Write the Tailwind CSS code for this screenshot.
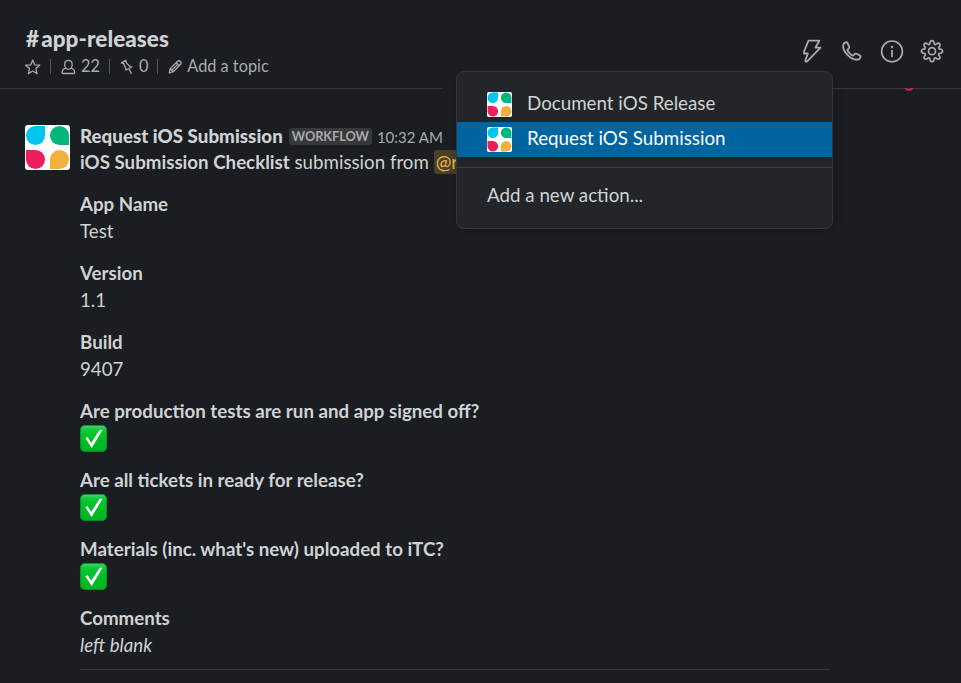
<!DOCTYPE html>
<html lang="en">
<head>
<meta charset="utf-8">
<title>#app-releases</title>
<script src="https://cdn.jsdelivr.net/npm/@tailwindcss/browser@4"></script>
</head>
<body class="bg-[#1a1d21] font-['Lato',sans-serif] text-[#d1d2d3] overflow-hidden">
<svg class="absolute h-0 w-0">
  <symbol id="petals" viewBox="0 0 45 45">
    <rect width="45" height="45" rx="3" fill="#fff"/>
    <path d="M10.500 1H20v9.500a9.500 9.500 0 1 1-9.500-9.500z" fill="#00c5ef"/>
    <path d="M34.500 1a9.500 9.500 0 0 1 9.500 9.500V20h-9.500a9.500 9.500 0 0 1 0-19z" fill="#00b67c"/>
    <path d="M1 25h9.500a9.500 9.500 0 1 1-9.500 9.500z" fill="#ed1e5b"/>
    <path d="M25 34.500a9.500 9.500 0 1 1 9.500 9.500H25z" fill="#f2b03f"/>
  </symbol>
  <linearGradient id="green" x1="0" y1="0" x2="0" y2="1">
    <stop offset="0" stop-color="#45d96a"/><stop offset=".16" stop-color="#12ca3c"/><stop offset=".3" stop-color="#00c52b"/><stop offset="1" stop-color="#00b222"/>
  </linearGradient>
  <symbol id="check" viewBox="0 0 27 27">
    <rect x=".4" y=".4" width="26.200" height="26.200" rx="4.500" fill="url(#green)" stroke="#079b22" stroke-width=".8"/>
    <path d="M5.300 13.300l2.300-1.200 3.600 5.700L19.700 4.700h2.900L11.700 23z" fill="#fff"/>
  </symbol>
</svg>
<div class="relative h-[683px] w-[961px] overflow-hidden">
  <header class="flex h-[89px] justify-between border-b border-[#35383b] pl-[25px] pr-[17px] pt-[26px]">
    <div>
      <h1 class="h-7 pl-px text-[22.500px] font-black leading-[25px] tracking-[0.060px]"><span class="mr-[2px]">#</span>app-releases</h1>
      <div class="flex h-6 items-center text-[16.300px] leading-6 text-[#ababad]">
        <svg class="mt-px h-4 w-4" viewBox="0 0 16 16" fill="none" stroke="currentColor" stroke-width="1.300" stroke-linejoin="round"><path d="M7.700 1l2 4.800 5.100.4-3.900 3.400 1.200 5L7.700 12l-4.400 2.600 1.200-5L.7 6.200l5.100-.4z"/></svg>
        <span class="ml-[9px] mt-px h-[15px] w-px bg-[#56585b]"></span>
        <svg class="ml-[10px] mt-px h-4 w-[15px]" viewBox="0 0 15 16" fill="none" stroke="currentColor" stroke-width="1.300" stroke-linejoin="round"><path d="M4.900 9.100C2.500 6.400 3.400 1.300 7.400 1.300s4.900 5.100 2.500 7.800M4.900 9.100c1.500 1.600 3.500 1.600 5 0 2.400.5 3.800 2.400 3.800 4.600 0 .5-.3.800-.8.800h-11c-.5 0-.8-.3-.8-.8 0-2.200 1.400-4.100 3.800-4.600z"/></svg>
        <span class="ml-[5px]">22</span>
        <span class="ml-[9px] mt-px h-[15px] w-px bg-[#56585b]"></span>
        <svg class="ml-[10px] mt-px h-4 w-[14px]" viewBox="0 0 14 16" fill="none" stroke="currentColor" stroke-width="1.300" stroke-linecap="round" stroke-linejoin="round"><path d="M1.400 3.900L5.700 1.200l.7 2.500 2.700 3.200 2.800 1.100-6 3-.5-2.600-1.700-3.900zM9 10l2.300 4.400"/></svg>
        <span class="ml-[5px]">0</span>
        <span class="ml-[9px] mt-px h-[15px] w-px bg-[#56585b]"></span>
        <svg class="ml-[10px] mt-px h-4 w-[15px]" viewBox="0 0 15 16" fill="none" stroke="currentColor" stroke-width="1.250" stroke-linejoin="round"><path d="M1.300 14l.8-4.200 7.300-7.300c1-1 2.200-.8 3 0s1 2 0 3L5.300 12.700zM2.100 9.800l3.200 2.900M8.300 3.700l3 3M4 11l6.200-6.100"/></svg>
        <span class="ml-[4px]">Add a topic</span>
      </div>
    </div>
    <div class="flex h-[50px] items-center gap-4 text-[#ababad]">
      <svg class="h-6 w-6" viewBox="0 0 24 24" fill="none" stroke="currentColor" stroke-width="1.800" stroke-linejoin="round"><path d="M8.500 1.700h10.800l-3.900 7h5.100L7.200 22.400c-1 .8-2.300 0-1.800-1.300l2.500-6.600H4L4.200 12z"/></svg>
      <svg class="h-6 w-6" viewBox="0 0 24 24" fill="none" stroke="currentColor" stroke-width="1.800" stroke-linejoin="round"><path d="M3.200 6.200c.1-1.100 1.100-2.400 2.300-2.800.8-.3 1.600 0 2 .7l1.600 3.200c.4.800.2 1.700-.4 2.300l-1 .9c-.4.400-.3.900-.1 1.300 1.100 1.800 2.700 3.400 4.600 4.600.5.300 1 .2 1.300-.2l.8-.9c.6-.7 1.500-.9 2.300-.5l3.100 1.600c.8.400 1.100 1.200.8 2-.5 1.300-1.700 2.200-2.900 2.300C10.900 21.200 2.700 12.800 3.200 6.200z"/></svg>
      <svg class="h-6 w-6" viewBox="0 0 24 24" fill="none" stroke="currentColor" stroke-width="1.700" stroke-linecap="round"><circle cx="12" cy="12.400" r="10.400"/><path d="M12 11.500v6"/><circle cx="12" cy="8" r=".4"/></svg>
      <svg class="h-6 w-6" viewBox="0 0 24 24" fill="none" stroke="currentColor" stroke-width="1.700" stroke-linejoin="round"><circle cx="12" cy="12.200" r="3.500"/><path d="M10.300 2.500Q12 .8 13.700 2.500L14.300 5.100L15.500 5.600L17.700 4.200Q20.200 4.100 20 6.500L18.600 8.700L19.100 9.900L21.700 10.500Q23.400 12.200 21.700 13.900L19.100 14.500L18.600 15.700L20 17.900Q20.200 20.300 17.700 20.200L15.500 18.800L14.300 19.300L13.700 21.900Q12 23.600 10.300 21.900L9.700 19.300L8.500 18.800L6.300 20.200Q3.800 20.300 4 17.900L5.400 15.700L4.900 14.500L2.300 13.900Q.6 12.200 2.300 10.500L4.900 9.900L5.400 8.700L4 6.500Q3.800 4.100 6.300 4.200L8.500 5.600L9.700 5.100z"/></svg>
    </div>
  </header>

  <main class="flex gap-[10px] pl-[25px] pt-[34px] text-[18.720px] leading-[27px]">
    <svg class="mt-[2px] h-[45px] w-[45px] shrink-0"><use href="#petals"/></svg>
    <article class="w-[750px] border-b border-[#35383b] pb-[10px]">
      <div class="flex h-[26px] items-center whitespace-nowrap">
        <b class="font-black tracking-[0.030px]">Request iOS Submission</b>
        <span class="ml-[6px] h-[17px] rounded-[3px] bg-[#36383b] px-[3px] text-[12.700px] font-bold leading-[17px] text-[#ababad]">WORKFLOW</span>
        <time class="ml-[5px] pt-[2px] text-[15px] text-[#ababad]">10:32 AM</time>
      </div>
      <p class="h-[27px] whitespace-nowrap"><b>iOS Submission Checklist</b> submission from <span class="rounded-[3px] bg-[#4a3f28] px-[2px] py-[1px] text-[#e8b844]">@ryan</span></p>
      <dl class="mt-[15px] flex flex-col gap-[15px]">
        <div><dt class="font-bold">App Name</dt><dd>Test</dd></div>
        <div><dt class="font-bold">Version</dt><dd>1.1</dd></div>
        <div><dt class="font-bold">Build</dt><dd>9407</dd></div>
        <div><dt class="font-bold">Are production tests are run and app signed off?</dt><dd><svg class="h-[27px] w-[27px]"><use href="#check"/></svg></dd></div>
        <div><dt class="font-bold">Are all tickets in ready for release?</dt><dd><svg class="h-[27px] w-[27px]"><use href="#check"/></svg></dd></div>
        <div><dt class="font-bold">Materials (inc. what's new) uploaded to iTC?</dt><dd><svg class="h-[27px] w-[27px]"><use href="#check"/></svg></dd></div>
        <div><dt class="font-bold">Comments</dt><dd class="italic">left blank</dd></div>
      </dl>
    </article>
  </main>

  <div class="absolute left-[443px] top-[88px] h-px w-[14px] bg-[#1a1d21]"></div>
  <div class="absolute left-[904px] top-[88px] h-[3px] w-[10px] overflow-hidden"><div class="-mt-[7px] h-[10px] w-[10px] rounded-full border-2 border-[#d61f5b]"></div></div>

  <div class="absolute left-[456px] top-[71px] h-[158px] w-[377px] rounded-[8px] border border-[#35383b] bg-[#222529] pt-[15px] text-[18.750px] shadow-[0_4px_12px_rgba(0,0,0,0.15)]">
    <div class="flex h-[35px] items-center gap-[15px] pl-[30px]"><svg class="h-[25px] w-[25px]"><use href="#petals"/></svg><span class="pb-[2px]">Document iOS Release</span></div>
    <div class="flex h-[35px] items-center gap-[15px] bg-[#0064a1] pl-[30px] text-white"><svg class="h-[25px] w-[25px]"><use href="#petals"/></svg><span class="pb-[2px]">Request iOS Submission</span></div>
    <div class="mt-[10px] border-t border-[#3b3e41] pl-[30px] pt-[9px] leading-[35px]">Add a new action...</div>
  </div>
</div>
</body>
</html>
